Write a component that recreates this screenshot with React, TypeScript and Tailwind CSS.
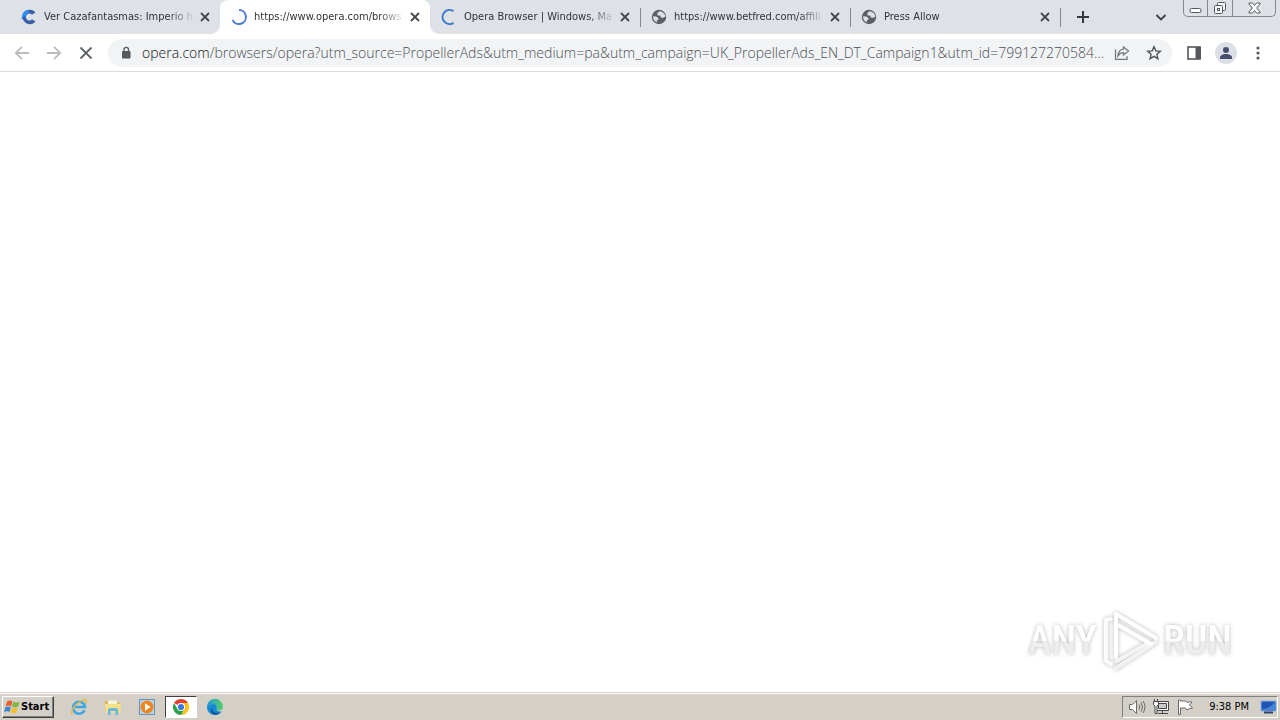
import type { ReactNode } from "react";

type IconProps = { className?: string };

function CloseIcon({ className = "" }: IconProps) {
  return (
    <svg className={className} width="10" height="10" viewBox="0 0 10 10" stroke="currentColor" strokeWidth="1.8" fill="none">
      <path d="M1 1l8 8M9 1L1 9" />
    </svg>
  );
}

function SiteIcon() {
  return (
    <svg width="16" height="16" viewBox="0 0 16 16">
      <path d="M14.5 3.6A7.2 7.2 0 1 0 14.5 12.4L11 10.3a3.4 3.4 0 1 1 0-4.6z" fill="#3d5fa8" />
      <path d="M8 .8A7.2 7.2 0 0 0 .8 8.400l3.800-.4a3.400 3.400 0 0 1 3-3.200z" fill="#2f8cf0" />
      <path d="M0 9.500l4-2.500v3.500z" fill="#1d63d8" />
    </svg>
  );
}

function SpinnerRight() {
  return (
    <svg width="16" height="16" viewBox="0 0 16 16" fill="none" stroke="#4c7bd9" strokeWidth="2">
      <path d="M8 1a7 7 0 1 1-6.500 9.800" />
    </svg>
  );
}

function SpinnerLeft() {
  return (
    <svg width="16" height="16" viewBox="0 0 16 16" fill="none" stroke="#3b78d0" strokeWidth="2">
      <path d="M12.500 2.200A7 7 0 1 0 12.500 13.800" />
    </svg>
  );
}

function GlobeIcon() {
  return (
    <svg width="16" height="16" viewBox="0 0 16 16">
      <circle cx="8" cy="8" r="7.200" fill="#5b5f66" />
      <path d="M8.300 2.200L6.200 4.600l.6 1.800 2.500.2.500 1.900 2.700.3 1.900-1.200C14 4.700 11.600 2.300 8.300 2.200z" fill="#dee1e6" />
      <path d="M2 7.300l3.200.2 2.400 1.800-.3 1.500-1.500.5.300 2.200C3.600 12.800 2 10.400 2 7.300z" fill="#dee1e6" />
    </svg>
  );
}

type TabData = { title: string; icon: ReactNode; active?: boolean; divider?: boolean };

const tabs: TabData[] = [
  { title: "Ver Cazafantasmas: Imperio h", icon: <SiteIcon /> },
  { title: "https://www.opera.com/brows", icon: <SpinnerRight />, active: true },
  { title: "Opera Browser | Windows, Ma", icon: <SpinnerLeft />, divider: true },
  { title: "https://www.betfred.com/affili", icon: <GlobeIcon />, divider: true },
  { title: "Press Allow", icon: <GlobeIcon />, divider: true },
];

function Tab({ title, icon, active, divider }: TabData) {
  return (
    <div
      className={`relative flex h-[34px] w-[210px] min-w-0 items-center pl-[11px] pr-2.5 ${active ? "rounded-t-lg bg-white" : ""}`}
    >
      {active && (
        <>
          <span className="absolute bottom-0 -left-2 size-2 bg-[radial-gradient(circle_at_0_0,#dee1e6_7px,#ffffff_8px)]" />
          <span className="absolute bottom-0 -right-2 size-2 bg-[radial-gradient(circle_at_100%_0,#dee1e6_7px,#ffffff_8px)]" />
        </>
      )}
      <button className="flex min-w-0 flex-1 items-center gap-[7px] text-left">
        <span className="shrink-0">{icon}</span>
        <span className="min-w-0 flex-1 overflow-hidden whitespace-nowrap mask-[linear-gradient(to_right,black_calc(100%-28px),transparent)]">
          {title}
        </span>
      </button>
      <button aria-label={`Close ${title}`} className="ml-1 shrink-0 text-[#45484d]">
        <CloseIcon />
      </button>
      {divider && <span className="absolute -right-px top-2 h-[19px] w-px bg-[#85888d]" />}
    </div>
  );
}

function WindowButtons() {
  return (
    <div className="flex h-[17px] self-start rounded-b-[5px] border border-t-0 border-[#85888f] text-[#54585f]">
      <button aria-label="Minimize" className="flex w-6 items-center justify-center border-r border-[#85888f]">
        <svg width="13" height="13" viewBox="0 0 13 13" fill="#fff" stroke="currentColor">
          <rect x="1" y="6.500" width="11" height="4" rx="1.500" />
        </svg>
      </button>
      <button aria-label="Restore" className="flex w-[25px] items-center justify-center border-r border-[#85888f]">
        <svg width="14" height="14" viewBox="0 0 14 14" fill="#f4f5f7" stroke="currentColor">
          <rect x="4.500" y="1.500" width="8" height="8" rx="1" />
          <rect x="1.500" y="4.500" width="8" height="8" rx="1" />
          <rect x="4.500" y="7.500" width="2" height="2" />
        </svg>
      </button>
      <button aria-label="Close" className="flex w-[42px] items-center justify-center">
        <svg width="13" height="12" viewBox="0 0 13 12" fill="#fff" stroke="currentColor">
          <path d="M1 1h3.500l2 2.500L8.500 1H12v1L8.700 6l3.300 4v1H8.500l-2-2.500-2 2.500H1v-1l3.300-4L1 2z" />
        </svg>
      </button>
    </div>
  );
}

function TabStrip() {
  return (
    <header className="flex h-[34px] bg-[#dee1e6] pl-[10px] pr-1 text-[11px] text-[#303338]">
      <nav className="flex min-w-0">
        {tabs.map((tab) => (
          <Tab key={tab.title} {...tab} />
        ))}
      </nav>
      <button aria-label="New tab" className="ml-4 shrink-0 text-[#35383d]">
        <svg width="14" height="14" viewBox="0 0 14 14" fill="none" stroke="currentColor" strokeWidth="2">
          <path d="M7 1v12M1 7h12" />
        </svg>
      </button>
      <button aria-label="Search tabs" className="ml-auto mr-4 shrink-0 text-[#3c3f44]">
        <svg width="12" height="12" viewBox="0 0 12 12" fill="none" stroke="currentColor" strokeWidth="1.800">
          <path d="M1.500 4L6 8.500 10.500 4" />
        </svg>
      </button>
      <WindowButtons />
    </header>
  );
}

function Toolbar() {
  return (
    <div className="flex h-[38px] items-center border-b border-[#dadce0] bg-white px-3.5">
      <div className="flex items-center gap-4">
        <button aria-label="Back" className="text-[#b9bbbe]">
          <svg width="16" height="16" viewBox="0 0 16 16" fill="none" stroke="currentColor" strokeWidth="1.800">
            <path d="M15 8H2M8 1.800L1.800 8 8 14.200" />
          </svg>
        </button>
        <button aria-label="Forward" className="text-[#b9bbbe]">
          <svg width="16" height="16" viewBox="0 0 16 16" fill="none" stroke="currentColor" strokeWidth="1.800">
            <path d="M1 8h13M8 1.800L14.200 8 8 14.200" />
          </svg>
        </button>
        <button aria-label="Stop loading" className="text-[#5f6368]">
          <svg width="16" height="16" viewBox="0 0 16 16" fill="none" stroke="currentColor" strokeWidth="1.800">
            <path d="M2.500 2.500l11 11M13.500 2.500l-11 11" />
          </svg>
        </button>
      </div>
      <div className="ml-3.5 flex h-7 min-w-0 flex-1 items-center rounded-full bg-[#f1f3f4] pl-3 pr-2.5">
        <button aria-label="Site information" className="mr-2.5 shrink-0">
          <svg width="12" height="14" viewBox="0 0 12 14">
            <rect x="2" y="5" width="8.500" height="7.500" rx="1" fill="#55585c" />
            <path d="M4 5.500V3.600a2.250 2.250 0 0 1 4.500 0v1.900" fill="none" stroke="#55585c" strokeWidth="1.300" />
          </svg>
        </button>
        <a
          href="#address"
          className="min-w-0 flex-1 truncate font-['Open_Sans','Noto_Sans',sans-serif] text-[14px] font-light text-[#4c5055]"
        >
          <span className="text-[#101114]">opera.com</span>
          /browsers/opera?utm_source=PropellerAds&amp;utm_medium=pa&amp;utm_campaign=UK_PropellerAds_EN_DT_Campaign1&amp;utm_id=799127270584...
        </a>
        <button aria-label="Share" className="ml-1 shrink-0 text-[#74777c]">
          <svg width="16" height="16" viewBox="0 0 16 16" fill="none" stroke="currentColor" strokeWidth="1.300">
            <path d="M1.500 4.500v9.800h11.500v-3" />
            <path d="M9.500 2l5 4-5 4V7.700C7 7.700 5.500 8.500 4 10.800 4.200 7.200 6.200 4.600 9.500 4.200z" />
          </svg>
        </button>
        <button aria-label="Bookmark" className="ml-4 shrink-0 text-[#505358]">
          <svg width="16" height="16" viewBox="0 0 16 16" fill="none" stroke="currentColor" strokeWidth="1.400">
            <path d="M8 1.800l1.800 4.100 4.500.4-3.400 3 1 4.400L8 11.400l-3.900 2.300 1-4.400-3.400-3 4.500-.4z" />
          </svg>
        </button>
      </div>
      <div className="ml-3.5 flex items-center">
        <button aria-label="Side panel">
          <svg width="16" height="16" viewBox="0 0 16 16">
            <rect x="2" y="2" width="12" height="12" fill="none" stroke="#55585c" strokeWidth="1.600" />
            <path d="M9.500 2H15v12H9.500z" fill="#55585c" />
          </svg>
        </button>
        <button aria-label="Profile" className="ml-[13px]">
          <svg width="22" height="22" viewBox="0 0 22 22">
            <circle cx="11" cy="11" r="11" fill="#dce0e6" />
            <circle cx="11" cy="8" r="3" fill="#44506b" />
            <path d="M5 15.700c0-2.500 3-3.700 6-3.700s6 1.200 6 3.700V17H5z" fill="#44506b" />
          </svg>
        </button>
        <button aria-label="Menu" className="ml-[13px]">
          <svg width="16" height="16" viewBox="0 0 16 16" fill="#55585c">
            <circle cx="8" cy="3" r="1.600" />
            <circle cx="8" cy="8" r="1.600" />
            <circle cx="8" cy="13" r="1.600" />
          </svg>
        </button>
      </div>
    </div>
  );
}

function Watermark() {
  return (
    <div className="absolute bottom-5 right-12 flex items-center gap-[3px] font-['Roboto_Condensed','Liberation_Sans_Narrow',sans-serif] text-[40px] font-medium leading-[60px] text-white drop-shadow-[0_0_2px_rgba(0,0,0,0.28)]">
      <span className="bg-linear-to-b from-white from-50% to-[#ededed] to-50% bg-clip-text text-transparent">ANY</span>
      <svg width="60" height="62" viewBox="0 0 60 62" fill="none" strokeLinejoin="round" strokeLinecap="round" strokeWidth="4">
        <path d="M11 9L6 10V51l5 3" stroke="#fbfbfb" />
        <path d="M16 58L56 32" stroke="#f2f2f2" />
        <path d="M17 51l31-18" stroke="#f4f4f4" />
        <path d="M16 47V4l40 24" stroke="#ffffff" />
        <path d="M18 15l33 19" stroke="#ffffff" />
      </svg>
      <span className="bg-linear-to-b from-white from-50% to-[#ededed] to-50% bg-clip-text text-transparent">RUN</span>
    </div>
  );
}

function WindowsFlag() {
  return (
    <svg width="17" height="16" viewBox="0 0 17 16">
      <path d="M3 2.500c2-1.300 3.700-1.200 5.500-.1L7.200 7.200C5.400 6.200 3.600 6.200 1.700 7.300z" fill="#e9602c" />
      <path d="M9.300 2.800c2 1.100 4 1.100 6.200 0l-1.400 4.900c-2 1.100-4 1.100-6 0z" fill="#7fb83f" />
      <path d="M1.400 8.300c2-1.200 3.700-1.100 5.500 0l-1.400 4.800c-1.800-1.100-3.500-1-5.400.1z" fill="#3f86d2" />
      <path d="M7.800 8.800c2 1 4 1 6 0l-1.400 4.800c-2 1.100-4 1.100-6 0z" fill="#f7bf2d" />
    </svg>
  );
}

function IeIcon() {
  return (
    <svg width="18" height="18" viewBox="0 0 18 18" fill="none">
      <path d="M14.500 12.200A6 6 0 1 1 15 9H5" stroke="#3ea6e5" strokeWidth="2.500" />
      <path d="M2.500 16.500C-.5 14 5 6.500 10 3.500c3-1.900 6.200-2.300 6.500-.6.200 1-.5 2.100-1.200 3" stroke="#e8b93b" strokeWidth="1.400" />
    </svg>
  );
}

function FolderIcon() {
  return (
    <svg width="18" height="18" viewBox="0 0 18 18">
      <path d="M1 3h5l1 1.500h9V14H1z" fill="#dfb550" />
      <path d="M4 2.500h9V7H4z" fill="#f8f5dc" />
      <path d="M1 6h16l-.5 8.500h-15z" fill="#f7df8b" />
      <path d="M4 17v-5q0-2 2-2h6q2 0 2 2v5h-2.500v-4h-5v4z" fill="#69b7df" />
    </svg>
  );
}

function PlayerIcon() {
  return (
    <svg width="18" height="18" viewBox="0 0 18 18">
      <rect x="1.500" y="1.500" width="15" height="15" fill="#b8d3e8" stroke="#6595bd" />
      <circle cx="9" cy="9" r="6.500" fill="#ef861d" />
      <path d="M7 5.300L12.500 9 7 12.700z" fill="#fff" />
    </svg>
  );
}

function ChromeIcon() {
  return (
    <svg width="18" height="18" viewBox="0 0 18 18">
      <path d="M9 9L2.070 5A8 8 0 0 1 15.930 5z" fill="#e3402f" />
      <path d="M9 5h6.930A8 8 0 0 1 9 17l3.460-6z" fill="#fbc116" />
      <path d="M5.540 11L2.070 5A8 8 0 0 0 9 17l3.460-6z" fill="#2da04b" />
      <circle cx="9" cy="9" r="4" fill="#fff" />
      <circle cx="9" cy="9" r="3.100" fill="#3979e4" />
    </svg>
  );
}

function EdgeIcon() {
  return (
    <svg width="18" height="18" viewBox="0 0 18 18">
      <defs>
        <linearGradient id="edge-top" x1="0" x2="1">
          <stop stopColor="#1c99dc" />
          <stop offset="1" stopColor="#58cf65" />
        </linearGradient>
      </defs>
      <path d="M1 9a8 8 0 0 1 16-.5c.1 3-2 4-4.500 4-2 0-2.800-1-2-2C11.500 8.500 10 6 7 6 4 6 1.500 7.300 1 9z" fill="url(#edge-top)" />
      <path d="M1 9.500C1 7 4 6 7 6c3 0 4.300 2 3.700 4-.9 2.500 1.300 4 5 3.300C14 16 11.500 17 9 17c-4.500 0-8-3.500-8-7.500z" fill="#168bd2" />
      <path d="M6.300 9.500c-1 4 3 6.500 8.500 4.800C13 16.300 11 17 9 17c-4.500-1.500-5-5.500-2.700-7.500z" fill="#15539e" />
    </svg>
  );
}

const launchers = [
  { name: "Internet Explorer", icon: <IeIcon /> },
  { name: "Windows Explorer", icon: <FolderIcon /> },
  { name: "Media Player", icon: <PlayerIcon /> },
  { name: "Google Chrome", icon: <ChromeIcon />, active: true },
  { name: "Microsoft Edge", icon: <EdgeIcon /> },
];

function Taskbar() {
  return (
    <footer className="flex h-7 items-center border-t border-[#d4d0c8] bg-[#d4d0c8] px-0.5 text-[11px] text-black shadow-[inset_0_1px_0_#ffffff]">
      <button className="flex h-[22px] w-[52px] items-center border border-t-white border-r-[#404040] border-b-[#404040] border-l-white pl-px font-bold shadow-[inset_-1px_-1px_0_#808080]">
        <WindowsFlag />
        <span className="pt-0.5">Start</span>
      </button>
      <nav className="ml-2 flex">
        {launchers.map(({ name, icon, active }) => (
          <button
            key={name}
            aria-label={name}
            className={`flex h-[22px] w-8 items-center justify-center border mx-px ${
              active ? "border-t-[#404040] border-l-[#404040] border-r-white border-b-white bg-white" : "border-transparent"
            }`}
          >
            {icon}
          </button>
        ))}
      </nav>
      <div className="ml-auto flex h-[22px] items-center border border-t-[#808080] border-r-white border-b-white border-l-[#808080] pl-[5px]">
        <button aria-label="Volume">
          <svg width="18" height="16" viewBox="0 0 18 16" fill="none" stroke="#6b6b6b">
            <path d="M1.500 5.500h3l4-4v13l-4-4h-3z" fill="#fff" />
            <path d="M11 5.500q1.500 2.500 0 5M13 3.500q3 4.500 0 9M15 2q4 6 0 12" />
          </svg>
        </button>
        <button aria-label="Network" className="ml-1.5">
          <svg width="18" height="16" viewBox="0 0 18 16" stroke="#484848" fill="#f5f5f5">
            <path d="M4.500 2.500h12v9h-12z" />
            <path d="M6.500 4.500h8v5h-8z" fill="#c9c9c9" />
            <path d="M6 14.500h10M10.500 11.500v3" />
            <path d="M2.500 0v2.500M5.500 0v2.500M1.500 2.500h5v3L5 7v7.500H3V7L1.500 5.500z" />
          </svg>
        </button>
        <button aria-label="Action Center" className="ml-1.5">
          <svg width="18" height="16" viewBox="0 0 18 16" fill="#fff" stroke="#686868">
            <path d="M2.500 1v14.500h2V9h5l1.500 2q2-2 5.500-2l-3-3 2.500-3q-3-.5-5 .5L9.500 2h-5V1z" />
          </svg>
        </button>
        <time className="ml-[15px] whitespace-nowrap pt-0.5">9:38 PM</time>
        <button aria-label="Show desktop" className="ml-2.5">
          <svg width="18" height="16" viewBox="0 0 18 16">
            <rect x="2" y="2" width="15" height="10" fill="#1f55b5" stroke="#8eb4e6" />
            <path d="M3 10q7 0 13-7v8H3z" fill="#4184d8" />
            <path d="M5 13.500h9" stroke="#33435f" strokeWidth="2" />
          </svg>
        </button>
      </div>
    </footer>
  );
}

export default function App() {
  return (
    <div className="flex min-h-screen flex-col bg-white font-['DejaVu_Sans_Condensed','DejaVu_Sans',sans-serif]">
      <TabStrip />
      <Toolbar />
      <main className="relative flex-1 bg-white">
        <Watermark />
      </main>
      <Taskbar />
    </div>
  );
}
